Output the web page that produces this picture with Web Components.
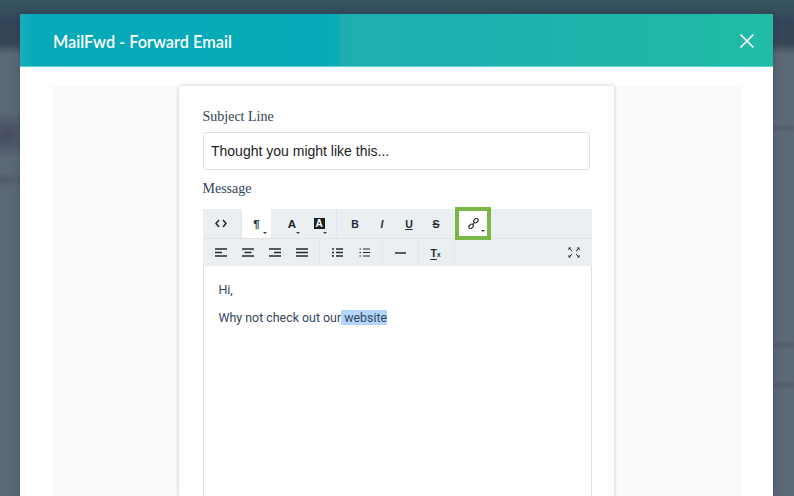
<!DOCTYPE html>
<html>
<head>
<meta charset="utf-8">
<title>MailFwd - Forward Email</title>
<style>
  html, body { margin: 0; height: 100%; }
  body {
    width: 794px;
    height: 496px;
    overflow: hidden;
    background:
      radial-gradient(ellipse 30px 24px at 6px 135px, rgba(62,66,92,0.75), rgba(62,66,92,0)),
      radial-gradient(ellipse 24px 8px at 6px 180px, rgba(70,78,96,0.5), rgba(70,78,96,0)),
      radial-gradient(ellipse 22px 5px at 785px 128px, rgba(70,80,94,0.5), rgba(70,80,94,0)),
      radial-gradient(ellipse 22px 5px at 785px 345px, rgba(70,80,94,0.5), rgba(70,80,94,0)),
      radial-gradient(ellipse 22px 5px at 785px 385px, rgba(70,80,94,0.5), rgba(70,80,94,0)),
      linear-gradient(to bottom, #35565f 0, #35505e 10px, #344559 22px, #374657 44px, #5b6875 54px, #5b6875 100%);
  }
</style>
</head>
<body>
<mail-modal heading="MailFwd - Forward Email">
  <form-field label="Subject Line" style="--field-gap: 6px">
    <subject-input value="Thought you might like this..."></subject-input>
  </form-field>
  <form-field label="Message" style="--field-gap: 11px; margin-top: 9px">
    <rich-editor>
      <p>Hi,</p>
      <p>Why not check out our<mark> website</mark></p>
    </rich-editor>
  </form-field>
</mail-modal>

<script>
(function() {
  class MailModal extends HTMLElement {
    constructor() {
      super();
      let shadowRoot = this.attachShadow({mode: 'open'});
      shadowRoot.innerHTML = `
<style>
  :host {
    display: block;
    margin: 14px 21px 0 20px;
    height: 482px;
    background: #fff;
    border-radius: 3px 3px 0 0;
    overflow: hidden;
    box-shadow: 0 0 6px rgba(30,40,55,0.35);
  }
  header {
    height: 53px;
    box-sizing: border-box;
    padding: 0 18px 0 33px;
    display: flex;
    align-items: center;
    justify-content: space-between;
    border-bottom: 1px solid #5fd0c8;
    background: linear-gradient(to right, #1badbd 0, #07a9b8 14px, #04aab7 300px, #0cabb6 318px, #1eaeb1 322px, #1eb1ae 500px, #20bca5 100%);
  }
  h1 {
    margin: 0;
    font: 600 16.3px "Lato", sans-serif;
    color: #fff;
    position: relative;
    top: 1px;
  }
  svg { display: block; margin-top: 1px; }
  main {
    display: flex;
    padding: 19px 32px 0;
    height: 411px;
  }
  .side { width: 127px; background: #fafafa; }
  .sheet {
    width: 435px;
    box-sizing: border-box;
    padding: 21px 22px 0 23.5px;
    background: #fff;
    box-shadow: 0 0 4px rgba(0,0,0,0.22);
    position: relative;
  }
</style>
<header>
  <h1></h1>
  <svg width="16" height="16" viewBox="0 0 16 16"><path d="M1.5 1.5 14.5 14.5M14.5 1.5 1.5 14.5" stroke="#fff" stroke-width="1.7" fill="none"/></svg>
</header>
<main>
  <div class="side"></div>
  <div class="sheet"><slot></slot></div>
  <div class="side"></div>
</main>`;
      shadowRoot.querySelector('h1').textContent = this.getAttribute('heading');
    }
  } // Class MailModal
  customElements.define('mail-modal', MailModal);

  class FormField extends HTMLElement {
    constructor() {
      super();
      let shadowRoot = this.attachShadow({mode: 'open'});
      shadowRoot.innerHTML = `
<style>
  :host { display: block; }
  label {
    display: block;
    font: 14px/19px "Liberation Serif", serif;
    color: #2f4256;
    margin-bottom: var(--field-gap, 8px);
  }
</style>
<label></label>
<slot></slot>`;
      shadowRoot.querySelector('label').textContent = this.getAttribute('label');
    }
  }
  customElements.define('form-field', FormField);

  class SubjectInput extends HTMLElement {
    constructor() {
      super();
      let shadowRoot = this.attachShadow({mode: 'open'});
      shadowRoot.innerHTML = `
<style>
  :host {
    display: block;
    width: 387.5px;
    height: 38px;
    box-sizing: border-box;
    padding: 0 7.5px;
    border: 1px solid #dfe3e6;
    border-radius: 3px;
    font: 14px/36px "Liberation Sans", sans-serif;
    color: #222;
  }
</style>
<span></span>`;
      shadowRoot.querySelector('span').textContent = this.getAttribute('value');
    }
  }
  customElements.define('subject-input', SubjectInput);

  class ToolGroup extends HTMLElement {
    constructor() {
      super();
      let shadowRoot = this.attachShadow({mode: 'open'});
      shadowRoot.innerHTML = `
<style>
  :host {
    display: flex;
    box-sizing: border-box;
    padding: 0 3.5px 0 4.5px;
    height: 100%;
    border-right: 1px solid #e1e6e8;
  }
  :host([plain]) { border-right: 0; margin-left: auto; padding-right: 4.5px; }
  :host([active]) { background: #fff; border-right: 0; padding: 0; }
  :host([wide]) { padding-left: 7.5px; }
</style>
<slot></slot>`;
    }
  }
  customElements.define('tool-group', ToolGroup);

  class ToolBtn extends HTMLElement {
    constructor() {
      super();
      let shadowRoot = this.attachShadow({mode: 'open'});
      shadowRoot.innerHTML = `
<style>
  :host {
    display: flex;
    align-items: center;
    justify-content: center;
    width: 27px;
    height: 100%;
    position: relative;
    font: bold 10.5px "Liberation Sans", sans-serif;
    color: #222b33;
  }
  .caret {
    position: absolute;
    right: var(--caret-right, 6px);
    bottom: 4px;
    width: 0;
    height: 0;
    border: 2px solid transparent;
    border-top: 2px solid #33404a;
    border-bottom: 0;
  }
</style>
<slot></slot>`;
      if (this.hasAttribute('caret')) {
        let caret = document.createElement('i');
        caret.className = 'caret';
        shadowRoot.appendChild(caret);
      }
    }
  }
  customElements.define('tool-btn', ToolBtn);

  class RichEditor extends HTMLElement {
    constructor() {
      super();
      let shadowRoot = this.attachShadow({mode: 'open'});
      shadowRoot.innerHTML = `
<style>
  :host {
    display: block;
    width: 389.5px;
    height: 300px;
    box-sizing: border-box;
    border-left: 1px solid #dfe3e6;
    border-right: 1px solid #dfe3e6;
    position: relative;
  }
  .row {
    display: flex;
    background: #eaf0f1;
    margin: 0 -1px;
  }
  .row.top { height: 29px; border-bottom: 1px solid #dfe5e7; }
  .row.bottom { height: 27px; }
  .code { width: 39.5px; padding: 0 0 0 5px; }
  .para { width: 29px; }
  .para tool-btn { width: 29px; --caret-right: 4px; font-size: 11.5px; }
  .link {
    position: absolute;
    left: 251.5px;
    top: -2px;
    width: 36px;
    height: 33px;
    box-sizing: border-box;
    border: 4px solid #7ab648;
    background: #fff;
    display: flex;
  }
  .link tool-btn { width: 28px; --caret-right: 2px; }
  .boxed {
    background: #1b1f24;
    color: #fff;
    width: 11px;
    height: 11px;
    line-height: 11px;
    text-align: center;
    font-size: 10px;
    box-sizing: border-box;
  }
  .a { font-size: 11.5px; color: #1b1f24; font-weight: bold; }
  .i { font-style: italic; }
  .u { text-decoration: underline; }
  .s { text-decoration: line-through; }
  .tx { font-size: 10.5px; position: relative; left: -1px; }
  .tx u { text-underline-offset: 2px; }
  .tx small { font-size: 6.5px; }
  svg { display: block; }
  .body {
    padding: 10px 16px 0 15px;
    font: 12.4px/28px "Roboto", sans-serif;
    color: #33475b;
  }
  ::slotted(p) { margin: 0; }
</style>
<div class="row top">
  <tool-group class="code"><tool-btn>
    <svg width="12" height="9" viewBox="0 0 12 9"><path d="M4 1 1 4.5 4 8M8 1 11 4.5 8 8" fill="none" stroke="#222b33" stroke-width="1.6"/></svg>
  </tool-btn></tool-group>
  <tool-group class="para" active><tool-btn caret>¶</tool-btn></tool-group>
  <tool-group wide>
    <tool-btn caret><span class="a">A</span></tool-btn>
    <tool-btn caret><span class="boxed">A</span></tool-btn>
  </tool-group>
  <tool-group plain style="margin-left:0">
    <tool-btn>B</tool-btn>
    <tool-btn><span class="i">I</span></tool-btn>
    <tool-btn><span class="u">U</span></tool-btn>
    <tool-btn><span class="s">S</span></tool-btn>
  </tool-group>
</div>
<div class="link"><tool-btn caret>
  <svg width="11" height="11" viewBox="0 0 11 11"><g fill="none" stroke="#222b33" stroke-width="1.1"><rect x="5.4" y="0.9" width="5" height="3.4" rx="1.7" transform="rotate(-45 7.9 2.6)"/><rect x="0.6" y="6.7" width="5" height="3.4" rx="1.7" transform="rotate(-45 3.1 8.4)"/><path d="M4.2 6.8 6.8 4.2"/></g></svg>
</tool-btn></div>
<div class="row bottom">
  <tool-group>
    <tool-btn><svg width="12" height="9" viewBox="0 0 12 9"><path d="M0 1H12M0 4.5H7M0 8H12" stroke="#222b33" stroke-width="1.4"/></svg></tool-btn>
    <tool-btn><svg width="12" height="9" viewBox="0 0 12 9"><path d="M0 1H12M2.5 4.5H9.5M0 8H12" stroke="#222b33" stroke-width="1.4"/></svg></tool-btn>
    <tool-btn><svg width="12" height="9" viewBox="0 0 12 9"><path d="M0 1H12M5 4.5H12M0 8H12" stroke="#222b33" stroke-width="1.4"/></svg></tool-btn>
    <tool-btn><svg width="12" height="9" viewBox="0 0 12 9"><path d="M0 1H12M0 4.5H12M0 8H12" stroke="#222b33" stroke-width="1.4"/></svg></tool-btn>
  </tool-group>
  <tool-group>
    <tool-btn><svg width="11" height="9" viewBox="0 0 11 9"><path d="M0 1H2M4 1H11M0 4.5H2M4 4.5H11M0 8H2M4 8H11" stroke="#222b33" stroke-width="1.4"/></svg></tool-btn>
    <tool-btn><svg width="11" height="9" viewBox="0 0 11 9"><path d="M0.5 1H2M4 1H11M0.5 4.5H2M4 4.5H11M0.5 8H2M4 8H11" stroke="#222b33" stroke-width="1.2"/></svg></tool-btn>
  </tool-group>
  <tool-group>
    <tool-btn><svg width="11" height="2" viewBox="0 0 11 2"><path d="M0 1H11" stroke="#222b33" stroke-width="1.6"/></svg></tool-btn>
  </tool-group>
  <tool-group>
    <tool-btn><span class="tx"><u>T</u><small>x</small></span></tool-btn>
  </tool-group>
  <tool-group plain>
    <tool-btn><svg width="12" height="11" viewBox="0 0 12 11"><g fill="#222b33"><path d="M0.5 0.5H3.3L0.5 3.3ZM11.5 0.5H8.7L11.5 3.3ZM0.5 10.5H3.3L0.5 7.7ZM11.5 10.5H8.7L11.5 7.7Z"/></g><path d="M2 2 4 3.8M10 2 8 3.8M2 9 4 7.2M10 9 8 7.2" stroke="#222b33" stroke-width="1"/></svg></tool-btn>
  </tool-group>
</div>
<div class="body"><slot></slot></div>`;
    }
  } // Class RichEditor
  customElements.define('rich-editor', RichEditor);
})();
</script>
<style>
  rich-editor mark { background: #b4d5fe; color: inherit; }
</style>
</body>
</html>
